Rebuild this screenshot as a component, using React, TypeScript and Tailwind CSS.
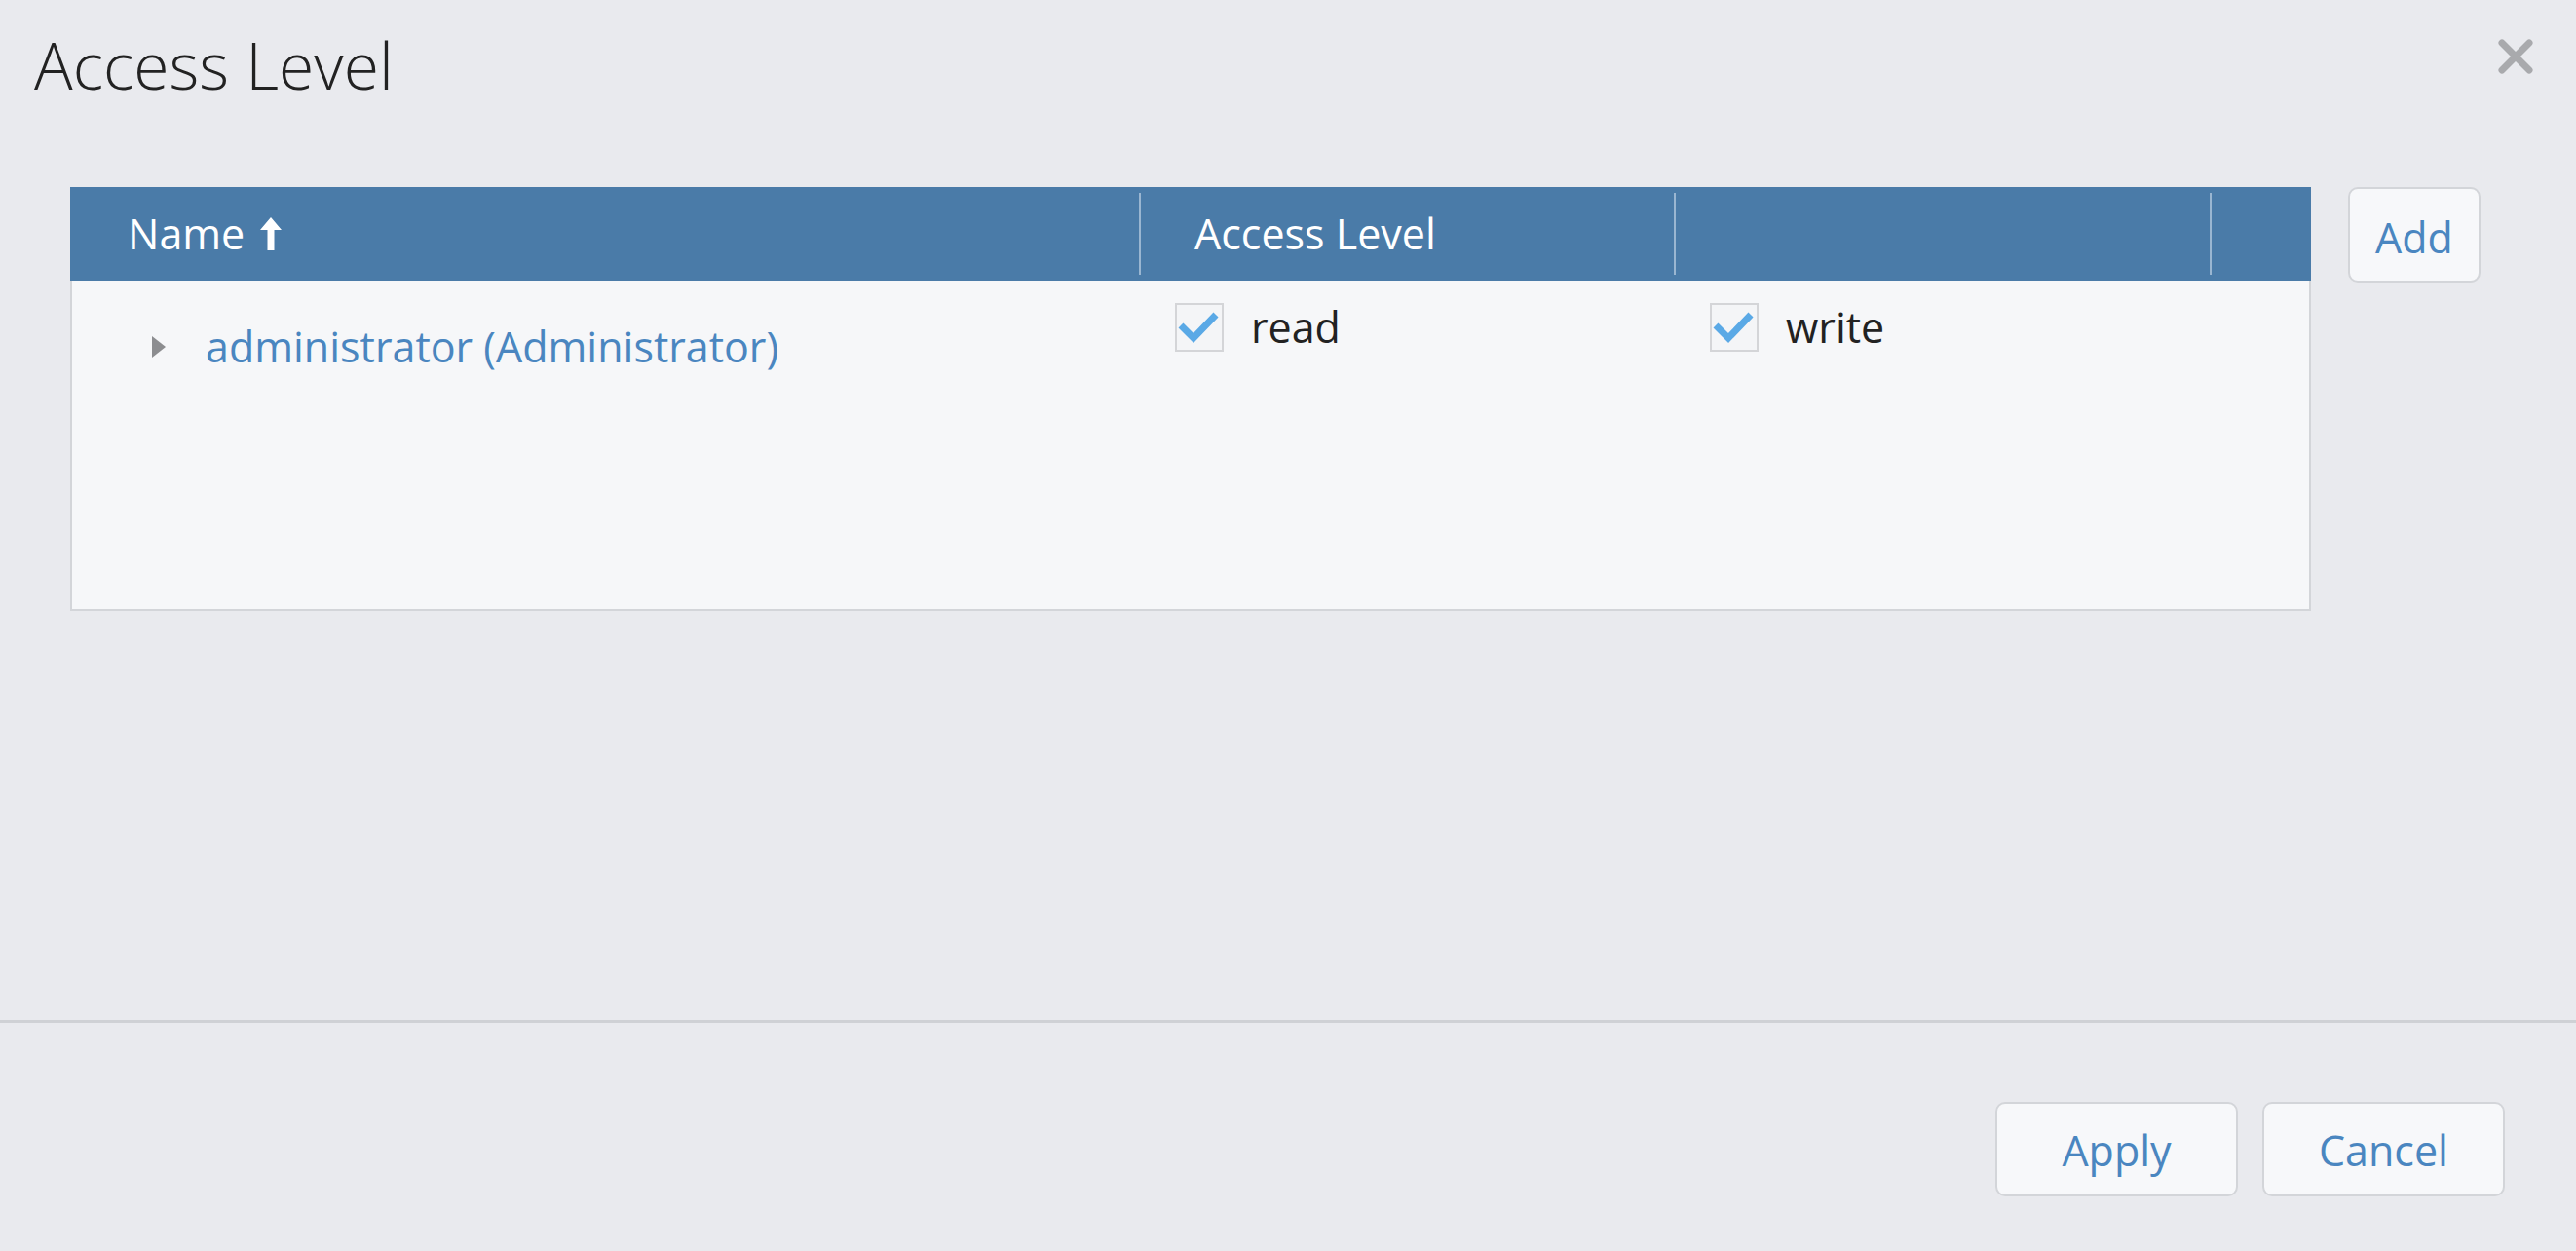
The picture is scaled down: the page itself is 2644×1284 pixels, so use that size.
import React from "react";

function Check() {
  return (
    <div className="w-[50px] h-[50px] border-2 border-[#d4d5d8] bg-[#f4f5f7] flex items-center justify-center">
      <svg width="46" height="46" viewBox="0 0 46 46">
        <path d="M4 21 L17 34 L40 10" fill="none" stroke="#5aa9e6" strokeWidth="7" strokeLinejoin="miter" strokeLinecap="butt" />
      </svg>
    </div>
  );
}

function Btn({ label, className }: { label: string; className: string }) {
  return (
    <button className={"rounded-[10px] border-2 border-[#d3d5d9] bg-[#f7f8fa] text-[#4a86c0] text-[43px] flex items-center justify-center " + className}>
      {label}
    </button>
  );
}

export default function App() {
  return (
    <div className="relative w-[2644px] h-[1284px] bg-[#e9eaee] flex flex-col" style={{ fontFamily: '"Open Sans", "Liberation Sans", sans-serif' }}>
      <div className="pl-[35px] pt-[26px] h-[192px]">
        <h1 className="text-[66px] font-light leading-[80px] text-[#222]">Access Level</h1>
      </div>
      <button className="absolute right-[44px] top-[40px] w-[36px] h-[36px] flex items-center justify-center">
        <svg width="36" height="36" viewBox="0 0 36 36">
          <path d="M4 4 L32 32 M32 4 L4 32" stroke="#a9aaad" strokeWidth="7" strokeLinecap="round" />
        </svg>
      </button>

      <div className="flex pl-[72px] gap-[38px] items-start">
        <div className="w-[2300px] flex flex-col">
          <div className="h-[96px] bg-[#4a7ba8] grid grid-cols-[1097px_549px_550px_1fr] text-white text-[43px]">
            <div className="flex items-center pl-[59px] gap-[14px]">
              <span>Name</span>
              <svg width="26" height="38" viewBox="0 0 26 38">
                <path d="M13 2 L24 15 L16.5 15 L16.5 36 L9.5 36 L9.5 15 L2 15 Z" fill="#ffffff" />
              </svg>
            </div>
            <div className="flex items-center pl-[55px] border-l-2 border-[#9ab6d1] my-[6px]">Access Level</div>
            <div className="border-l-2 border-[#9ab6d1] my-[6px]"></div>
            <div className="border-l-2 border-[#9ab6d1] my-[6px]"></div>
          </div>
          <div className="h-[339px] bg-[#f6f7f9] border-2 border-t-0 border-[#d3d5d9] grid grid-cols-[1095px_549px_550px_1fr] items-start">
            <div className="flex items-center pl-[81px] pt-[40px] gap-[40px]">
              <svg width="16" height="24" viewBox="0 0 16 24">
                <path d="M1 1 L15 12 L1 23 Z" fill="#8c8d90" />
              </svg>
              <span className="text-[43px] text-[#4a86c0] leading-[56px]">administrator (Administrator)</span>
            </div>
            <div className="flex items-center pl-[37px] pt-[23px] gap-[28px]">
              <Check />
              <span className="text-[43px] text-[#222] leading-[48px]">read</span>
            </div>
            <div className="flex items-center pl-[37px] pt-[23px] gap-[28px]">
              <Check />
              <span className="text-[43px] text-[#222] leading-[48px]">write</span>
            </div>
            <div></div>
          </div>
        </div>
        <Btn label="Add" className="w-[136px] h-[98px] pt-[6px]" />
      </div>

      <div className="mt-auto">
        <div className="h-[3px] bg-[#cfd1d5]"></div>
        <div className="h-[234px] flex justify-end items-start pt-[81px] pr-[73px] gap-[25px]">
          <Btn label="Apply" className="w-[249px] h-[97px] pt-[4px]" />
          <Btn label="Cancel" className="w-[249px] h-[97px] pt-[4px]" />
        </div>
      </div>
    </div>
  );
}
